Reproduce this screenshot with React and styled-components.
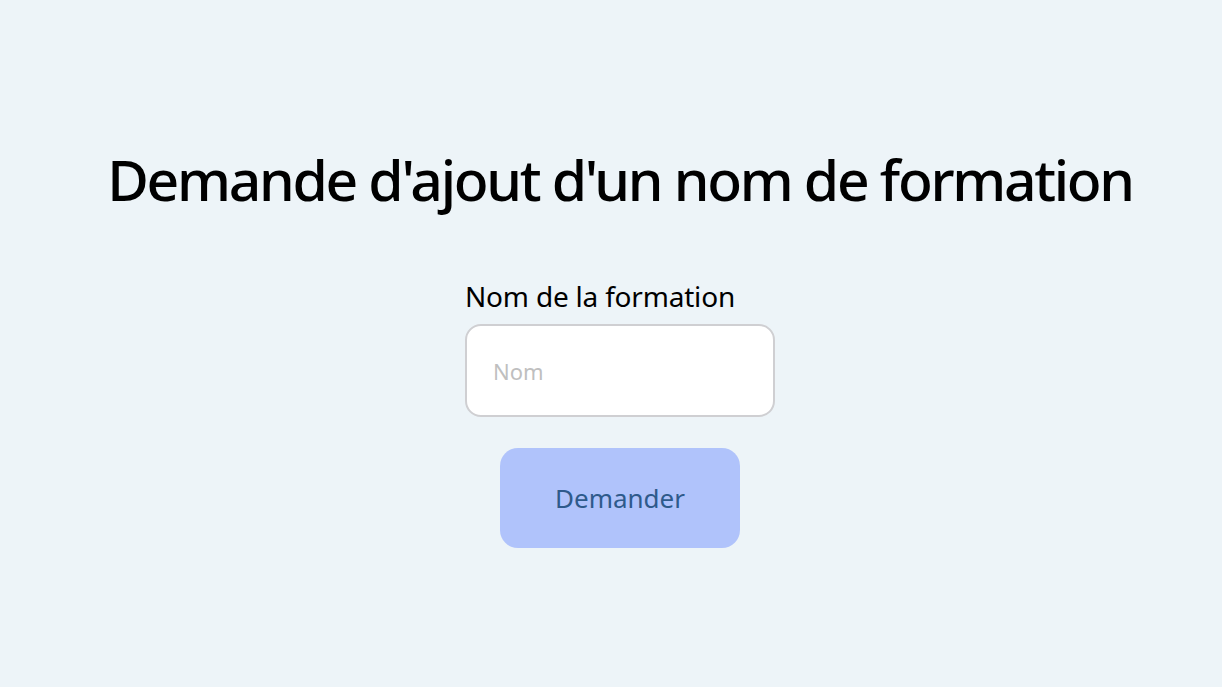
import React from "react";
import styled, { createGlobalStyle } from "styled-components";

const GlobalStyle = createGlobalStyle`
  html, body {
    margin: 0;
    padding: 0;
    background: #edf4f8;
    font-family: "Noto Sans", "Open Sans", sans-serif;
  }
`;

const Page = styled.main`
  min-height: 687px;
  box-sizing: border-box;
  padding: 140px 0 0 18px;
  display: flex;
  flex-direction: column;
  align-items: center;
`;

const Title = styled.h1`
  margin: 0;
  font-size: 57px;
  font-weight: 500;
  letter-spacing: -2.3px;
  line-height: 78px;
  color: #000;
`;

const Form = styled.form`
  margin-top: 60px;
  display: flex;
  flex-direction: column;
  align-items: center;
`;

const Field = styled.div`
  display: flex;
  flex-direction: column;
  gap: 10px;
`;

const Label = styled.label`
  font-size: 28px;
  letter-spacing: -0.2px;
  line-height: 36px;
  color: #000;
`;

const Input = styled.input`
  box-sizing: border-box;
  width: 310px;
  height: 93px;
  border: 2px solid #cfcfd2;
  border-radius: 16px;
  background: #fff;
  padding: 0 26px;
  font-family: inherit;
  font-size: 22px;
  outline: none;

  &::placeholder {
    color: #bfbfbf;
  }
`;

const Button = styled.button`
  margin-top: 31px;
  width: 240px;
  height: 100px;
  border: none;
  border-radius: 18px;
  background: #b0c3fb;
  color: #2e5a8b;
  font-family: inherit;
  font-size: 26px;
  cursor: pointer;
`;

export default function App() {
  return (
    <>
      <GlobalStyle />
      <Page>
        <Title>Demande d'ajout d'un nom de formation</Title>
        <Form onSubmit={(e) => e.preventDefault()}>
          <Field>
            <Label htmlFor="nom">Nom de la formation</Label>
            <Input id="nom" placeholder="Nom" />
          </Field>
          <Button type="submit">Demander</Button>
        </Form>
      </Page>
    </>
  );
}
